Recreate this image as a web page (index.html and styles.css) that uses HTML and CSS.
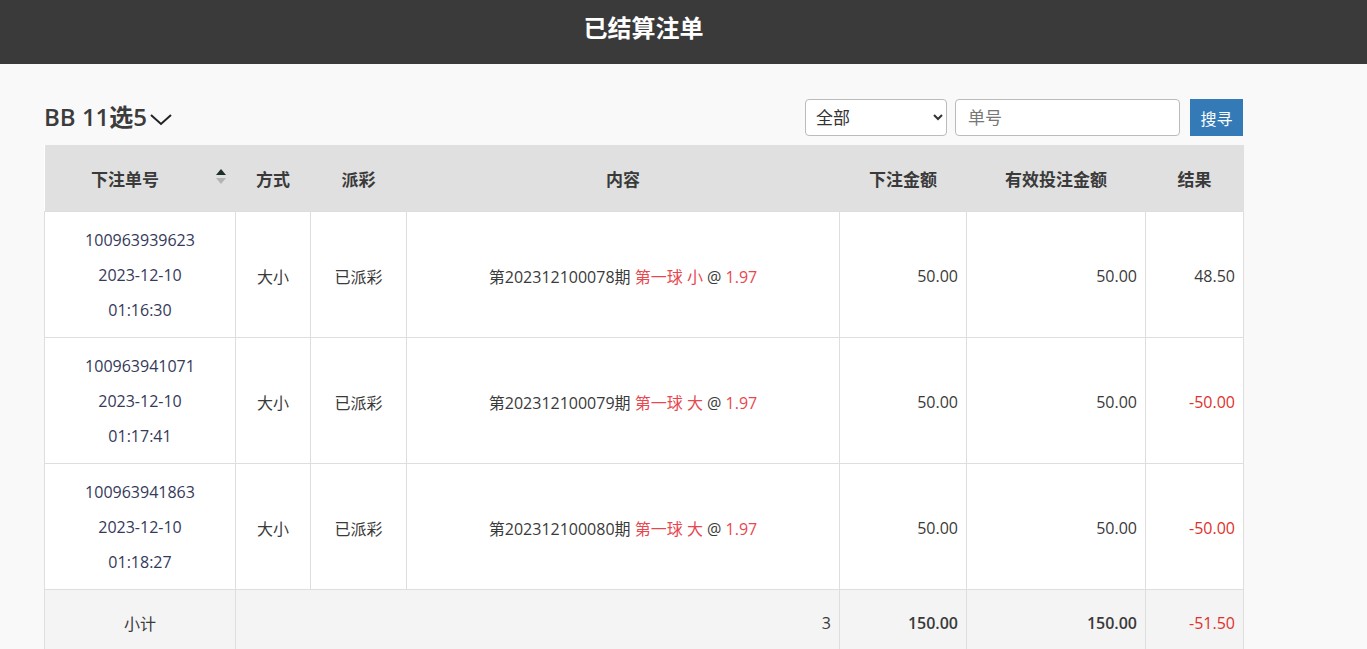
FILE: index.html
```html
<!DOCTYPE html>
<html lang="zh">
<head>
    <meta charset="UTF-8">
    <title>已结算注单</title>
    <link rel="stylesheet" href="styles.css">
</head>
<body>

<header class="top-bar">
    <div class="page-wrap">
        <h1>已结算注单</h1>
    </div>
</header>

<div class="page-wrap content">
    <div class="toolbar">
        <div class="game-name">BB 11选5
            <svg class="chevron" width="24" height="14" viewBox="0 0 24 14"><path d="M2 3 L12 12 L22 3" fill="none" stroke="#222" stroke-width="2"/></svg>
        </div>
        <div class="filters">
            <select class="type-select">
                <option>全部</option>
            </select>
            <input class="order-input" type="text" placeholder="单号">
            <button class="search-btn">搜寻</button>
        </div>
    </div>

    <table class="bets">
        <colgroup>
            <col style="width:191px">
            <col style="width:75px">
            <col style="width:96px">
            <col style="width:433px">
            <col style="width:127px">
            <col style="width:179px">
            <col style="width:98px">
        </colgroup>
        <thead>
            <tr>
                <th class="sortable">下注单号
                    <span class="sort-icon"><i class="up"></i><i class="down"></i></span>
                </th>
                <th>方式</th>
                <th>派彩</th>
                <th>内容</th>
                <th>下注金额</th>
                <th>有效投注金额</th>
                <th>结果</th>
            </tr>
        </thead>
        <tbody>
            <tr>
                <td class="order"><div>100963939623</div><div>2023-12-10</div><div>01:16:30</div></td>
                <td>大小</td>
                <td>已派彩</td>
                <td>第202312100078期 <span class="red">第一球 小</span> @ <span class="red">1.97</span></td>
                <td class="num">50.00</td>
                <td class="num">50.00</td>
                <td class="num">48.50</td>
            </tr>
            <tr>
                <td class="order"><div>100963941071</div><div>2023-12-10</div><div>01:17:41</div></td>
                <td>大小</td>
                <td>已派彩</td>
                <td>第202312100079期 <span class="red">第一球 大</span> @ <span class="red">1.97</span></td>
                <td class="num">50.00</td>
                <td class="num">50.00</td>
                <td class="num loss">-50.00</td>
            </tr>
            <tr>
                <td class="order"><div>100963941863</div><div>2023-12-10</div><div>01:18:27</div></td>
                <td>大小</td>
                <td>已派彩</td>
                <td>第202312100080期 <span class="red">第一球 大</span> @ <span class="red">1.97</span></td>
                <td class="num">50.00</td>
                <td class="num">50.00</td>
                <td class="num loss">-50.00</td>
            </tr>
        </tbody>
        <tfoot>
            <tr>
                <td>小计</td>
                <td colspan="3" class="num">3</td>
                <td class="num bold">150.00</td>
                <td class="num bold">150.00</td>
                <td class="num loss">-51.50</td>
            </tr>
        </tfoot>
    </table>
</div>

</body>
</html>
```

FILE: styles.css
```css
body,
html {
    margin: 0;
    background-color: #f9f9f9;
    font-family: "Open Sans", "Noto Sans CJK SC", sans-serif;
    color: #333;
    font-size: 16px;
}
.page-wrap {
    width: 1199px;
    margin-left: 44px;
}
.top-bar {
    background-color: #3a3a3a;
    height: 64px;
}
.top-bar h1 {
    margin: 0;
    line-height: 56px;
    text-align: center;
    color: #fff;
    font-size: 24px;
    font-weight: bold;
}
.content {
    padding-top: 35px;
}
.toolbar {
    display: flex;
    justify-content: space-between;
    align-items: flex-start;
    height: 46px;
}
.game-name {
    font-size: 24px;
    font-weight: 600;
    color: #3c3c3c;
    display: flex;
    align-items: center;
    gap: 2px;
    line-height: 36px;
}
.chevron {
    margin-top: 4px;
}
.filters {
    display: flex;
    align-items: center;
}
.type-select {
    width: 142px;
    height: 37px;
    border: 1px solid #bbb;
    border-radius: 4px;
    background: #fff;
    font-family: inherit;
    font-size: 17px;
    color: #333;
    padding: 0 6px;
}
.order-input {
    width: 225px;
    height: 37px;
    box-sizing: border-box;
    margin-left: 8px;
    border: 1px solid #bbb;
    border-radius: 4px;
    padding: 0 12px;
    font-family: inherit;
    font-size: 17px;
}
.order-input::placeholder {
    color: #777;
}
.search-btn {
    margin-left: 10px;
    width: 53px;
    height: 37px;
    border: none;
    background-color: #337ab7;
    color: #fff;
    font-family: inherit;
    font-size: 16px;
    padding: 0;
}
.bets {
    width: 1199px;
    border-collapse: collapse;
    table-layout: fixed;
    background-color: #fff;
}
.bets th {
    background-color: #e0e0e0;
    height: 66px;
    font-weight: 600;
    font-size: 17px;
    color: #3a3a3a;
    text-align: center;
    padding: 0;
}
.bets th.sortable {
    position: relative;
    padding-right: 30px;
}
.sort-icon {
    position: absolute;
    right: 10px;
    top: 24px;
}
.sort-icon i {
    display: block;
    width: 0;
    height: 0;
    border-left: 5px solid transparent;
    border-right: 5px solid transparent;
    margin-bottom: 3px;
}
.sort-icon .up {
    border-bottom: 6px solid #1d2f2c;
}
.sort-icon .down {
    border-top: 6px solid #b4b4b4;
}
.bets td {
    border: 1px solid #dedede;
    padding: 11px 8px 9px;
    text-align: center;
    font-size: 16px;
    color: #3a3a3a;
}
.bets td.order div {
    line-height: 35px;
}
.bets td.order {
    color: #35395a;
}
.bets td.num {
    text-align: right;
}
.red {
    color: #e8474f;
}
.bets td.loss {
    color: #e0312b;
}
.bets tfoot td {
    background-color: #f4f4f4;
    height: 44px;
}
.bets tfoot td.bold {
    font-weight: 600;
}
```
